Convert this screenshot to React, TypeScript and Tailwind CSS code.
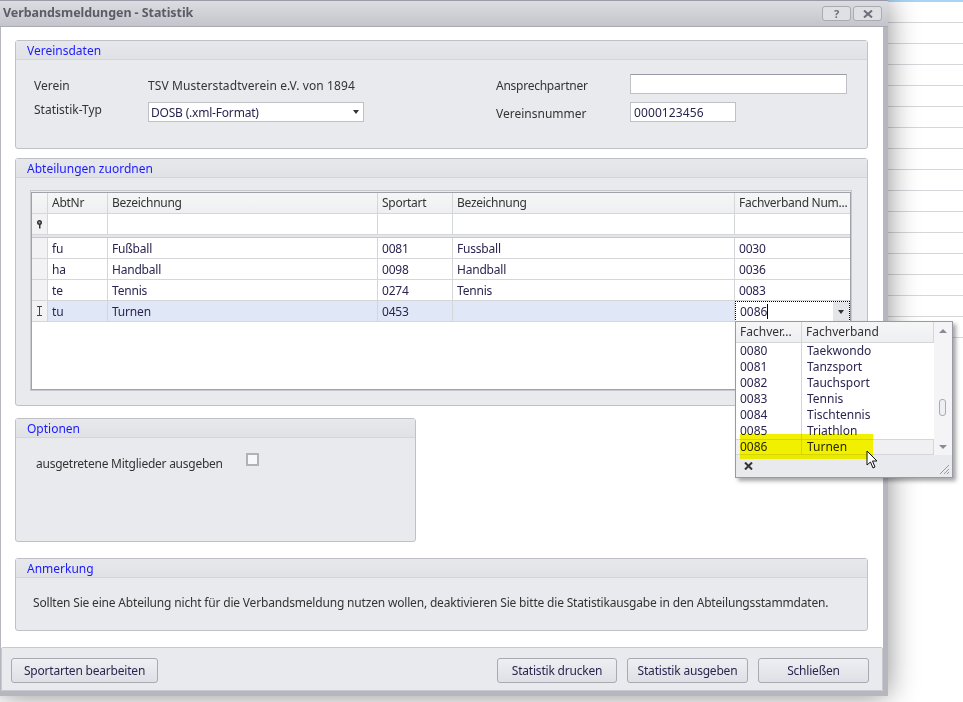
import React from "react";

const F = "font-['Noto_Sans','Liberation_Sans',sans-serif]";

function Panel({ title, className, children }: { title: string; className: string; children?: React.ReactNode }) {
  return (
    <section className={`rounded-[3px] border border-[#c0c1c7] bg-[#e9eaee] ${className}`}>
      <div className="h-[19px] bg-gradient-to-b from-[#e7e8eb] to-[#e1e2e6] border-b border-[#d4d5da] pl-[11px] text-[12px] leading-[19px] text-[#1a1aff]">{title}</div>
      {children}
    </section>
  );
}

function Btn({ label, w }: { label: string; w: string }) {
  return (
    <div className={`h-[25px] ${w} rounded-[3px] border border-[#a9aab1] bg-gradient-to-b from-[#eeeff2] to-[#dfe0e5] text-center text-[12px] leading-[23px] tracking-[-0.2px] text-[#2a2550]`}>{label}</div>
  );
}

const cols = ["w-[60px]", "w-[270px]", "w-[75px]", "w-[282px]", "flex-1"];

function Row({ cells, active, head, ind }: { cells: string[]; active?: boolean; head?: boolean; ind?: React.ReactNode }) {
  return (
    <div className={`flex h-[21px] border-b border-[#d5d6da] text-[12px] ${active ? "bg-[#e0e8f8]" : head ? "bg-gradient-to-b from-[#f6f6f7] to-[#eeeff1] leading-[20px] tracking-[-0.28px]" : "bg-white"} ${head ? "" : "leading-[22px] tracking-[-0.2px]"}`}>
      <div className={`w-[16px] shrink-0 border-r border-[#d5d6da] flex items-center justify-center ${head ? "" : "bg-[#f2f2f4]"}`}>{ind}</div>
      {cells.map((c, i) => (
        <div key={i} className={`${cols[i]} shrink-0 ${i === 4 ? "" : "border-r border-[#d5d6da]"} pl-[4px] whitespace-nowrap ${head ? "text-[#333]" : "text-[#2a2550]"}`}>{c}</div>
      ))}
    </div>
  );
}

const bgLines = Array.from({ length: 16 }, (_, i) => i);
const drop = [
  ["0080", "Taekwondo"],
  ["0081", "Tanzsport"],
  ["0082", "Tauchsport"],
  ["0083", "Tennis"],
  ["0084", "Tischtennis"],
  ["0085", "Triathlon"],
];

export default function App() {
  return (
    <div className={`relative h-[702px] w-[963px] overflow-hidden bg-white ${F}`}>
      <div className="h-[2px] bg-[#a9d4f5]" />
      {bgLines.map((i) => (
        <div key={i} className="h-[21px] border-b border-[#d5d5da]" />
      ))}

      {/* window */}
      <div className="absolute left-0 top-0 flex h-[696px] w-[888px] flex-col bg-[#b5b6be] shadow-[0_0_28px_rgba(0,0,0,0.45)]">
        <div className="flex h-[27px] shrink-0 items-center justify-between border-y border-t-[#9a9aa8] border-b-[#a9aab2] bg-gradient-to-b from-[#dcdde1] to-[#c4c5cc]">
          <div className="pl-[3px] text-[12.5px] font-bold tracking-[-0.07px] text-[#5c5c68]">Verbandsmeldungen - Statistik</div>
          <div className="flex gap-[2px] pr-[6px]">
            <div className="flex h-[15px] w-[29px] items-center justify-center rounded-[3px] border border-[#a9aab2] bg-[#dfe0e4] text-[11px] font-bold leading-none text-[#6e6e7a]">?</div>
            <div className="flex h-[15px] w-[29px] items-center justify-center rounded-[3px] border border-[#a9aab2] bg-[#dfe0e4]">
              <svg width="10" height="8" viewBox="0 0 10 8"><path d="M1 .5 9 7.500M9 .5 1 7.500" stroke="#6e6e7a" strokeWidth="2" /></svg>
            </div>
          </div>
        </div>

        <div className="ml-[1px] mr-[5px] mb-[5px] flex flex-1 flex-col bg-white">
          <div className="flex flex-1 flex-col pl-[14px] pt-[13px]">
            <Panel title="Vereinsdaten" className="h-[109px] w-[853px]">
              <div className="flex pl-[18px] pt-[14px] text-[12px] text-[#333]">
                <div className="w-[348px]">
                  <div className="flex h-[28px] items-start pt-[3px]">
                    <div className="w-[114px]">Verein</div>
                    <div className="tracking-[0.09px]">TSV Musterstadtverein e.V. von 1894</div>
                  </div>
                  <div className="flex items-start">
                    <div className="-mt-[1px] w-[114px]">Statistik-Typ</div>
                    <div className="relative h-[20px] w-[216px] border border-[#c0c1c7] bg-white pl-[2px] leading-[19px] tracking-[-0.2px] text-[#2a2550]">
                      DOSB (.xml-Format)
                      <span className="absolute right-[4px] top-[7px] h-0 w-0 border-x-[3.5px] border-t-[4px] border-x-transparent border-t-[#333]" />
                    </div>
                  </div>
                </div>
                <div className="ml-[114px] flex-none">
                  <div className="flex h-[28px] items-start">
                    <div className="w-[134px] pt-[3px] tracking-[-0.25px]">Ansprechpartner</div>
                    <div className="h-[20px] w-[217px] border border-[#c0c1c7] border-t-[#9a9aa6] bg-white" />
                  </div>
                  <div className="flex items-start">
                    <div className="w-[134px] pt-[3px]">Vereinsnummer</div>
                    <div className="h-[20px] w-[106px] border border-[#c0c1c7] bg-white pl-[3px] leading-[19px] tracking-[0.1px] text-[#2a2550]">0000123456</div>
                  </div>
                </div>
              </div>
            </Panel>

            <Panel title="Abteilungen zuordnen" className="mt-[9px] h-[248px] w-[853px]">
              <div className="ml-[14px] mt-[12px] h-[201px] w-[822px] border border-[#c8c9ce] pt-[1px]">
                <div className="h-full border border-[#a0a1ab] bg-white">
                  <Row head cells={["AbtNr", "Bezeichnung", "Sportart", "Bezeichnung", "Fachverband Num..."]} />
                  <Row cells={["", "", "", "", ""]} ind={
                    <svg width="7" height="9" viewBox="0 0 7 9"><circle cx="3.5" cy="2.500" r="2.500" fill="#333" /><circle cx="3.500" cy="2.500" r="1" fill="#aaa" /><path d="M3 4h1.500v4.500H3z" fill="#333" /></svg>
                  } />
                  <div className="h-[3px] border-b border-[#c8c9ce] bg-[#e4e5e8]" />
                  <Row cells={["fu", "Fußball", "0081", "Fussball", "0030"]} />
                  <Row cells={["ha", "Handball", "0098", "Handball", "0036"]} />
                  <Row cells={["te", "Tennis", "0274", "Tennis", "0083"]} />
                  <Row active cells={["tu", "Turnen", "0453", "", ""]} ind={
                    <svg width="7" height="10" viewBox="0 0 7 10"><path d="M1 .5h5M1 9.500h5M3.500 .5v9" stroke="#444" fill="none" /></svg>
                  } />
                </div>
              </div>
            </Panel>

            <Panel title="Optionen" className="mt-[12px] h-[124px] w-[401px]">
              <div className="flex items-start pl-[20px] pt-[15px] text-[12px] tracking-[-0.25px] text-[#333]">
                <div className="w-[210px] pt-[2px]">ausgetretene Mitglieder ausgeben</div>
                <div className="h-[13px] w-[13px] border-[2px] border-[#b0b1b9] bg-[#f8f8fa]" />
              </div>
            </Panel>

            <Panel title="Anmerkung" className="mt-[16px] h-[73px] w-[853px]">
              <div className="whitespace-nowrap pl-[17px] pt-[16px] text-[12px] tracking-[-0.18px] text-[#333]">
                Sollten Sie eine Abteilung nicht für die Verbandsmeldung nutzen wollen, deaktivieren Sie bitte die Statistikausgabe in den Abteilungsstammdaten.
              </div>
            </Panel>
          </div>

          <div className="flex h-[44px] shrink-0 items-start justify-between rounded-t-[2px] border border-[#c8c9ce] bg-[#e9eaee] px-[9px] pt-[10px]">
            <Btn label="Sportarten bearbeiten" w="w-[147px]" />
            <div className="flex gap-[10px] pr-[4px]">
              <Btn label="Statistik drucken" w="w-[120px]" />
              <Btn label="Statistik ausgeben" w="w-[121px]" />
              <Btn label="Schließen" w="w-[111px]" />
            </div>
          </div>
        </div>
      </div>

      {/* editor cell */}
      <div className="absolute left-[735px] top-[301px] flex h-[21px] w-[115px] border border-dotted border-black bg-white text-[12px] leading-[19px] text-[#2a2550]">
        <span className="pl-[4px]">0086</span>
        <span className="mt-[2px] h-[15px] w-px bg-black" />
        <div className="ml-auto flex w-[16px] items-center justify-center bg-[#e4e5e9]">
          <span className="h-0 w-0 border-x-[3.5px] border-t-[4px] border-x-transparent border-t-[#333]" />
        </div>
      </div>

      {/* dropdown */}
      <div className="absolute left-[735px] top-[321px] h-[157px] w-[218px] border border-[#9a9aa6] bg-white text-[12px] text-[#2a2550] shadow-[3px_3px_4px_rgba(0,0,0,0.35)]">
        <div className="flex h-[21px] w-[198px] border-b border-r border-[#d5d6da] bg-gradient-to-b from-[#f6f6f7] to-[#eeeff1] leading-[20px] text-[#333]">
          <div className="w-[66px] border-r border-[#d5d6da] pl-[4px]">Fachver...</div>
          <div className="pl-[4px]">Fachverband</div>
        </div>
        <div className="w-[198px] overflow-hidden">
          {drop.map(([a, b]) => (
            <div key={a} className="flex h-[16px] leading-[16px]">
              <div className="w-[66px] border-r border-[#d5d6da] pl-[4px]">{a}</div>
              <div className="pl-[5px]">{b}</div>
            </div>
          ))}
          <div className="flex h-[16px] border-y border-r border-[#d5d6da] bg-[#f0f0f2] leading-[14px]">
            <div className="w-[66px] border-r border-[#d5d6da] pl-[4px]">0086</div>
            <div className="pl-[5px]">Turnen</div>
          </div>
        </div>
        <div className="absolute right-0 top-0 h-[134px] w-[18px] bg-[#f4f4f7]">
          <span className="absolute left-[5px] top-[7px] h-0 w-0 border-x-[4px] border-b-[4px] border-x-transparent border-b-[#8a8a96]" />
          <span className="absolute left-[5px] top-[77px] h-[17px] w-[7px] rounded-[3px] border border-[#a9aab2] bg-[#eeeff2]" />
          <span className="absolute left-[5px] bottom-[7px] h-0 w-0 border-x-[4px] border-t-[4px] border-x-transparent border-t-[#8a8a96]" />
        </div>
        <div className="absolute inset-x-0 bottom-0 flex h-[22px] items-center bg-[#e9eaee] pl-[8px]">
          <svg width="9" height="8" viewBox="0 0 9 8"><path d="M1 .5 8 7.500M8 .5 1 7.500" stroke="#333" strokeWidth="2" /></svg>
          <svg className="absolute bottom-[2px] right-[2px]" width="11" height="11" viewBox="0 0 11 11"><path d="M10 1 1 10M10 5 5 10M10 8 8 10" stroke="#9a9aa6" /></svg>
        </div>
      </div>

      {/* highlight */}
      <div className="absolute left-[740px] top-[434px] h-[25px] w-[133px] bg-[#f0f000] mix-blend-darken" />
      <svg className="absolute left-[866px] top-[450px]" width="13" height="20" viewBox="0 0 13 20">
        <path d="M1 1v14l3.500-3 2.500 6 2-1-2.500-6H11z" fill="#fff" stroke="#111" strokeWidth="1" />
      </svg>
    </div>
  );
}
